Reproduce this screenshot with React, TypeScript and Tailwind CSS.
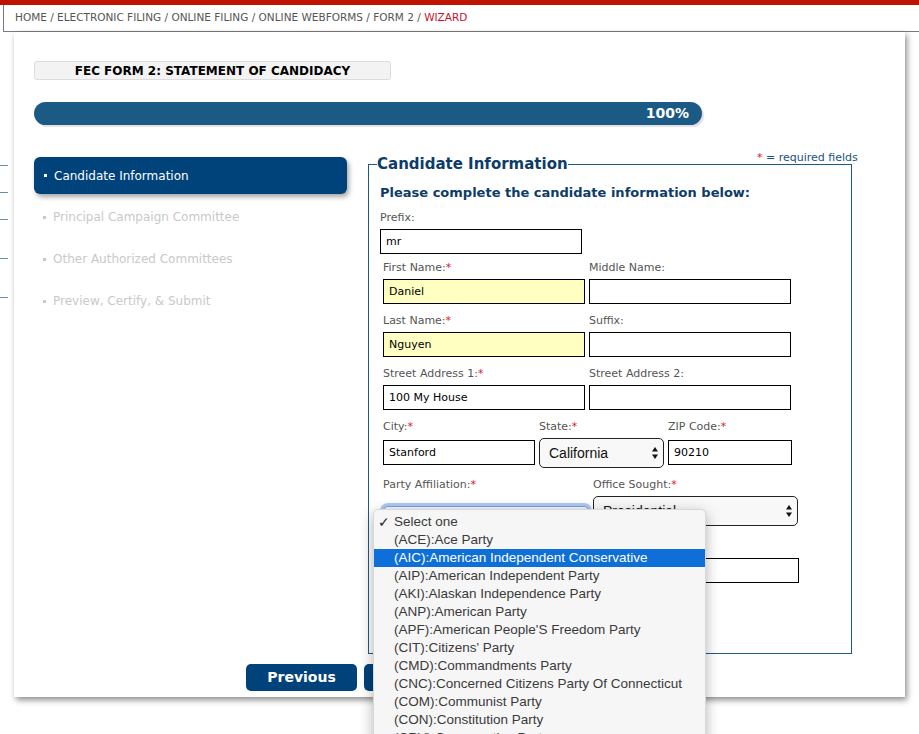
import React from 'react';

const verdana = "font-['DejaVu_Sans','Verdana',sans-serif]";
const helv = "font-['Liberation_Sans','Helvetica',Arial,sans-serif]";

function Req() {
  return <span className="text-[#e0141e]">*</span>;
}

function Label({ text, req }: { text: string; req?: boolean }) {
  return (
    <div className="h-[14px] text-[11px] leading-[14px] text-[#555] whitespace-nowrap">
      {text}
      {req && <Req />}
    </div>
  );
}

function TextInput({ value, w, yellow }: { value?: string; w: string; yellow?: boolean }) {
  return (
    <input
      readOnly
      value={value ?? ''}
      className={`${w} block h-[25px] border border-black px-[5px] text-[11px] text-black outline-none ${verdana} ${
        yellow ? 'bg-[#ffffc2]' : 'bg-white'
      }`}
    />
  );
}

function Arrows() {
  return (
    <svg width="6" height="12" viewBox="0 0 6 12" className="shrink-0">
      <path d="M3 0 L6 4.5 L0 4.5 Z" fill="#111" />
      <path d="M3 12 L6 7.5 L0 7.5 Z" fill="#111" />
    </svg>
  );
}

function FakeSelect({ value, w, focus }: { value: string; w: string; focus?: boolean }) {
  return (
    <div
      className={`${w} flex h-[30px] items-center justify-between rounded-[5px] border bg-[#f8f8f8] pl-[9px] pr-[5px] text-[14px] text-[#111] ${helv} ${
        focus ? 'border-[#6ea5ee] shadow-[0_0_0_3px_rgba(90,150,235,0.5)]' : 'border-[#222]'
      }`}
    >
      <span>{value}</span>
      <Arrows />
    </div>
  );
}

const navItems = ['Principal Campaign Committee', 'Other Authorized Committees', 'Preview, Certify, & Submit'];

const parties = [
  '(ACE):Ace Party',
  '(AIC):American Independent Conservative',
  '(AIP):American Independent Party',
  '(AKI):Alaskan Independence Party',
  '(ANP):American Party',
  "(APF):American People'S Freedom Party",
  "(CIT):Citizens' Party",
  '(CMD):Commandments Party',
  '(CNC):Concerned Citizens Party Of Connecticut',
  '(COM):Communist Party',
  '(CON):Constitution Party',
  '(CRV):Conservative Party',
];

export default function App() {
  return (
    <div className={`relative h-[734px] w-[919px] overflow-hidden bg-white ${verdana}`}>
      <div className="h-[5px] bg-[#bd1300]" />
      <div className="ml-[3px] flex h-[27px] items-center border-b border-l border-[#7a7a7a] pl-[11px] text-[10.5px] text-[#555]">
        HOME / ELECTRONIC FILING / ONLINE FILING / ONLINE WEBFORMS / FORM 2 /&nbsp;
        <span className="text-[#c8102e]">WIZARD</span>
      </div>

      <div className="flex">
        {/* bits of the page behind the card */}
        <div className="w-[14px] shrink-0">
          <div className="mt-[133px] h-px w-[8px] bg-[#6a8db0]" />
          <div className="mt-[26px] h-px w-[8px] bg-[#6a8db0]" />
          <div className="mt-[26px] h-px w-[8px] bg-[#6a8db0]" />
          <div className="mt-[38px] h-px w-[8px] bg-[#6a8db0]" />
          <div className="mt-[38px] h-px w-[8px] bg-[#6a8db0]" />
        </div>

        <div className="h-[665px] w-[891px] bg-white pl-[20px] pt-[29px] shadow-[2px_3px_6px_rgba(0,0,0,0.45)]">
          <div className="flex h-[19px] w-[357px] items-center justify-center rounded-[3px] border border-[#dcdcdc] bg-[#f3f3f3] text-[12px] font-bold text-black">
            FEC FORM 2: STATEMENT OF CANDIDACY
          </div>

          <div className="mt-[22px] flex h-[23px] w-[668px] items-center justify-end rounded-full bg-[#1c5a86] pr-[13px] text-[14px] font-bold text-white shadow-[2px_2px_1px_rgba(0,0,0,0.12)]">
            100%
          </div>

          <div className="relative mt-[30px] flex items-start">
            <div className="w-[313px] shrink-0 pt-[2px]">
              <div className="flex h-[37px] items-center rounded-[6px] bg-[#00437a] pl-[10px] text-[12px] text-white shadow-[2px_3px_5px_rgba(0,0,0,0.35)]">
                <span className="mr-[7px] h-[3px] w-[3px] bg-white" />
                Candidate Information
              </div>
              <div className="mt-[2px]">
                {navItems.map((t) => (
                  <div key={t} className="flex h-[42px] items-center pl-[9px] text-[12px] text-[#c9c9c9]">
                    <span className="mr-[7px] h-[3px] w-[3px] bg-[#c9c9c9]" />
                    {t}
                  </div>
                ))}
              </div>
            </div>

            <fieldset className="ml-[21px] h-[499px] w-[484px] border border-[#1c5a86] px-[8px]">
              <legend className="text-[15px] font-bold leading-[19px] text-[#0d3c69]">Candidate Information</legend>
              <div className="pl-[3px]">
                <div className="mt-[10px] text-[13px] font-bold leading-[17px] text-[#0d3c69]">
                  Please complete the candidate information below:
                </div>

                <div className="mt-[10px]">
                  <Label text="Prefix:" />
                  <div className="mt-[4px]">
                    <TextInput value="mr" w="w-[202px]" />
                  </div>
                </div>

                <div className="ml-[3px] mt-[7px] flex gap-[4px]">
                  <div>
                    <Label text="First Name:" req />
                    <div className="mt-[4px]">
                      <TextInput value="Daniel" w="w-[202px]" yellow />
                    </div>
                  </div>
                  <div>
                    <Label text="Middle Name:" />
                    <div className="mt-[4px]">
                      <TextInput w="w-[202px]" />
                    </div>
                  </div>
                </div>

                <div className="ml-[3px] mt-[10px] flex gap-[4px]">
                  <div>
                    <Label text="Last Name:" req />
                    <div className="mt-[4px]">
                      <TextInput value="Nguyen" w="w-[202px]" yellow />
                    </div>
                  </div>
                  <div>
                    <Label text="Suffix:" />
                    <div className="mt-[4px]">
                      <TextInput w="w-[202px]" />
                    </div>
                  </div>
                </div>

                <div className="ml-[3px] mt-[10px] flex gap-[4px]">
                  <div>
                    <Label text="Street Address 1:" req />
                    <div className="mt-[4px]">
                      <TextInput value="100 My House" w="w-[202px]" />
                    </div>
                  </div>
                  <div>
                    <Label text="Street Address 2:" />
                    <div className="mt-[4px]">
                      <TextInput w="w-[202px]" />
                    </div>
                  </div>
                </div>

                <div className="ml-[3px] mt-[10px] flex">
                  <div>
                    <Label text="City:" req />
                    <div className="mt-[6px]">
                      <TextInput value="Stanford" w="w-[152px]" />
                    </div>
                  </div>
                  <div className="ml-[4px]">
                    <Label text="State:" req />
                    <div className="mt-[4px]">
                      <FakeSelect value="California" w="w-[125px]" />
                    </div>
                  </div>
                  <div className="ml-[4px]">
                    <Label text="ZIP Code:" req />
                    <div className="mt-[6px]">
                      <TextInput value="90210" w="w-[124px]" />
                    </div>
                  </div>
                </div>

                <div className="ml-[3px] mt-[10px] flex">
                  <div>
                    <Label text="Party Affiliation:" req />
                    <div className="mt-[14px]">
                      <FakeSelect value="Select one" w="w-[206px]" focus />
                    </div>
                  </div>
                  <div className="ml-[4px]">
                    <Label text="Office Sought:" req />
                    <div className="mt-[4px]">
                      <FakeSelect value="Presidential" w="w-[205px]" />
                    </div>
                  </div>
                </div>

                <div className="ml-[213px] mt-[4px]">
                  <Label text="District:" />
                  <div className="mt-[4px]">
                    <TextInput w="w-[206px]" />
                  </div>
                </div>
              </div>
            </fieldset>

            <div className="absolute left-[723px] top-[-4px] text-[11px] leading-[14px] text-[#1c4f7d]">
              <Req /> = required fields
            </div>
          </div>

          <div className="ml-[212px] mt-[10px] flex gap-[7px]">
            <button className="h-[27px] w-[111px] rounded-[5px] bg-[#00437a] text-[14px] font-bold text-white">
              Previous
            </button>
            <button className="h-[27px] w-[111px] rounded-[5px] bg-[#00437a] text-[14px] font-bold text-white">
              Next
            </button>
          </div>
        </div>
      </div>

      {/* open party list */}
      <div
        className={`absolute left-[373px] top-[509px] w-[333px] rounded-t-[5px] border border-[#d8d8d8] bg-[#f6f6f6] pt-[3px] text-[13.5px] text-[#3a3a3a] shadow-[0_4px_14px_rgba(0,0,0,0.3)] ${helv}`}
      >
        <div className="flex h-[18px] items-center">
          <span className="w-[20px] pl-[4px] text-[14px] text-[#222]">✓</span>
          Select one
        </div>
        {parties.map((p, i) => (
          <div
            key={p}
            className={`flex h-[18px] items-center pl-[20px] ${i === 1 ? 'bg-[#0e6fd9] text-white' : ''}`}
          >
            {p}
          </div>
        ))}
      </div>
    </div>
  );
}
